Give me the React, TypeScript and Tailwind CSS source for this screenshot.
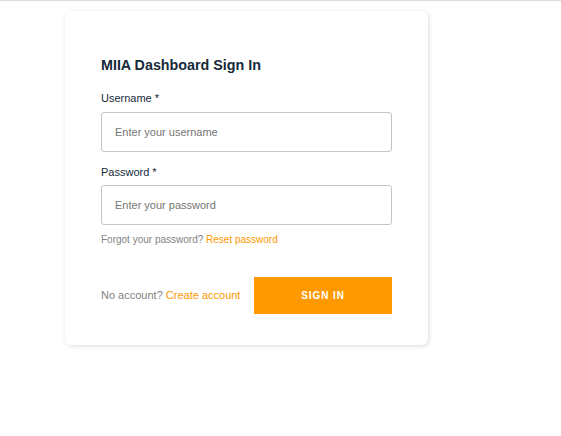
const font = { fontFamily: '"Liberation Sans", Arial, sans-serif' };

const Field = ({
  label,
  placeholder,
  type = "text",
  gap = "mt-[7px]",
}: {
  label: string;
  placeholder: string;
  type?: string;
  gap?: string;
}) => (
  <div className="flex flex-col">
    <label className="text-[11px] leading-[14px] text-[#152939]">{label}</label>
    <input
      type={type}
      placeholder={placeholder}
      className={`${gap} h-[40px] w-full rounded-[3px] border border-[#c4c4c4] bg-white px-[13px] text-[11px] text-[#152939] outline-none placeholder:text-[#757575]`}
    />
  </div>
);

export default function App() {
  return (
    <div className="min-h-[436px] w-full bg-white" style={font}>
      <div className="h-[1px] w-full bg-[#dcdcdc]" />
      <div className="ml-[65px] mt-[10px] flex w-[363px] flex-col rounded-[6px] bg-white px-[36px] pb-[31px] pt-[46px] shadow-[1px_1px_4px_0_rgba(0,0,0,0.15)]">
        <h1 className="text-[14.3px] font-bold leading-[17px] text-[#152939]">MIIA Dashboard Sign In</h1>
        <div className="mt-[17px]">
          <Field label="Username *" placeholder="Enter your username" />
        </div>
        <div className="mt-[13px]">
          <Field label="Password *" placeholder="Enter your password" type="password" gap="mt-[6px]" />
        </div>
        <p className="mt-[9px] text-[10px] leading-[12px] text-[#828282]">
          Forgot your password? <a className="text-[#ff9900]">Reset password</a>
        </p>
        <div className="mt-[31px] flex items-center justify-between">
          <span className="text-[11px] text-[#828282]">
            No account? <a className="text-[#ff9900]">Create account</a>
          </span>
          <button className="h-[37px] w-[138px] bg-[#ff9900] text-[10px] font-bold tracking-[0.9px] text-white">
            SIGN IN
          </button>
        </div>
      </div>
    </div>
  );
}
